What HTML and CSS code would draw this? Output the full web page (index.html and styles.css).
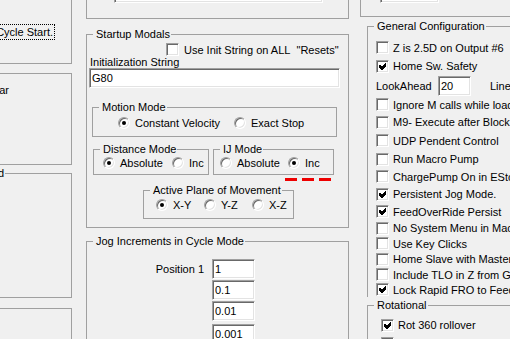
FILE: index.html
```html
<!DOCTYPE html>
<html lang="en">
<head>
  <meta charset="UTF-8">
  <title>General Logic Configuration</title>
  <link rel="stylesheet" href="styles.css">
</head>
<body>
  <div class="dialog">

    <!-- left column, mostly off screen -->
    <div class="col col-left">
      <div class="panel panel-tool">
        <div class="cut-row"><span class="focus">Stop Spindle. Wait for Cycle Start.</span></div>
      </div>
      <div class="panel panel-screen">
        <div class="cut-row">Flash Error Bar</div>
      </div>
      <fieldset class="group group-field">
        <legend><span>Tool Change Method</span></legend>
      </fieldset>
      <div class="panel panel-bottom"></div>
    </div>

    <!-- middle column -->
    <div class="col col-mid">
      <div class="panel panel-top-mid">
        <input class="edit edit-top-mid" type="text" value="">
      </div>

      <fieldset class="group startup">
        <legend>Startup Modals</legend>
        <label class="check check-init"><span class="cb"></span>Use Init String on ALL&nbsp; "Resets"</label>
        <div class="caption">Initialization String</div>
        <input class="edit edit-init" type="text" value="G80">

        <fieldset class="group motion">
          <legend>Motion Mode</legend>
          <div class="radios">
            <label class="radio"><span class="rb on"></span>Constant Velocity</label>
            <label class="radio"><span class="rb"></span>Exact Stop</label>
          </div>
        </fieldset>

        <div class="mode-row">
          <fieldset class="group distance">
            <legend>Distance Mode</legend>
            <div class="radios">
              <label class="radio"><span class="rb on"></span>Absolute</label>
              <label class="radio"><span class="rb"></span>Inc</label>
            </div>
          </fieldset>
          <fieldset class="group ij">
            <legend>IJ Mode</legend>
            <div class="radios">
              <label class="radio"><span class="rb"></span>Absolute</label>
              <label class="radio"><span class="rb on"></span>Inc</label>
            </div>
          </fieldset>
        </div>
        <div class="marker"></div>

        <fieldset class="group plane">
          <legend>Active Plane of Movement</legend>
          <div class="radios">
            <label class="radio"><span class="rb on"></span>X-Y</label>
            <label class="radio"><span class="rb"></span>Y-Z</label>
            <label class="radio"><span class="rb"></span>X-Z</label>
          </div>
        </fieldset>
      </fieldset>

      <fieldset class="group jog">
        <legend>Jog Increments in Cycle Mode</legend>
        <div class="jog-grid">
          <span class="pos">Position 1</span>
          <input class="edit" type="text" value="1">
          <input class="edit" type="text" value="0.1">
          <input class="edit" type="text" value="0.01">
          <input class="edit last" type="text" value="0.001">
        </div>
      </fieldset>
    </div>

    <!-- right column -->
    <div class="col col-right">
      <div class="panel panel-top-right">
        <input class="edit edit-top-right" type="text" value="">
      </div>

      <fieldset class="group general">
        <legend>General Configuration</legend>
        <div class="gen-grid">
          <label class="check"><span class="cb"></span>Z is 2.5D on Output #6</label>
          <label class="check"><span class="cb"><svg viewBox="0 0 9 9"><polygon points="1,3 2,3 4,5 7,1 8,1 8,4 4,8 3,8 1,6"/></svg></span>Home Sw. Safety</label>
          <div class="lookahead"><span class="la-label">LookAhead</span><input class="edit edit-la" type="text" value="20"><span class="la-unit">Lines</span></div>
          <label class="check"><span class="cb"></span>Ignore M calls while loading</label>
          <label class="check"><span class="cb"></span>M9- Execute after Block</label>
          <label class="check"><span class="cb"></span>UDP Pendent Control</label>
          <label class="check"><span class="cb"></span>Run Macro Pump</label>
          <label class="check"><span class="cb"></span>ChargePump On in EStop</label>
          <label class="check"><span class="cb"><svg viewBox="0 0 9 9"><polygon points="1,3 2,3 4,5 7,1 8,1 8,4 4,8 3,8 1,6"/></svg></span>Persistent Jog Mode.</label>
          <label class="check"><span class="cb"><svg viewBox="0 0 9 9"><polygon points="1,3 2,3 4,5 7,1 8,1 8,4 4,8 3,8 1,6"/></svg></span>FeedOverRide Persist</label>
          <label class="check"><span class="cb"></span>No System Menu in Mach3</label>
          <label class="check"><span class="cb"></span>Use Key Clicks</label>
          <label class="check"><span class="cb"></span>Home Slave with Master</label>
          <label class="check"><span class="cb"></span>Include TLO in Z from G31</label>
          <label class="check"><span class="cb"><svg viewBox="0 0 9 9"><polygon points="1,3 2,3 4,5 7,1 8,1 8,4 4,8 3,8 1,6"/></svg></span>Lock Rapid FRO to Feed FRO</label>
        </div>
      </fieldset>

      <fieldset class="group rotational">
        <legend>Rotational</legend>
        <div class="rot-grid">
          <label class="check"><span class="cb"><svg viewBox="0 0 9 9"><polygon points="1,3 2,3 4,5 7,1 8,1 8,4 4,8 3,8 1,6"/></svg></span>Rot 360 rollover</label>
          <label class="check"><span class="cb"></span>Ang Short Rot on G0</label>
        </div>
      </fieldset>
    </div>

  </div>
</body>
</html>
```

FILE: styles.css
```css
* {
  box-sizing: border-box;
}
html, body {
  margin: 0;
  width: 510px;
  height: 339px;
  overflow: hidden;
}
body {
  background: #f0f0f0;
  font-family: "Liberation Sans", Arial, sans-serif;
  font-size: 11px;
  line-height: 14px;
  color: #000;
}
.dialog {
  display: flex;
  align-items: flex-start;
  margin-left: -128px;
}
.col {
  flex: none;
  display: flex;
  flex-direction: column;
}
.col-left {
  width: 200px;
  margin-top: -40px;
}
.col-mid {
  width: 263px;
  margin-left: 14px;
  margin-top: -30px;
}
.col-right {
  width: 200px;
  margin-left: 11px;
  margin-top: -30px;
}

/* plain frames and group boxes */
.panel {
  border: 1px solid #a0a0a0;
}
.group {
  margin: 0;
  padding: 0;
  border: 1px solid #a0a0a0;
  min-width: 0;
}
.group > legend {
  margin-left: 6px;
  padding: 0 1px 0 3px;
  line-height: 14px;
  white-space: nowrap;
}

/* controls */
.cb {
  width: 13px;
  height: 13px;
  flex: none;
  display: flex;
  align-items: center;
  justify-content: center;
  background: #fff;
  border: 1px solid;
  border-color: #a0a0a0 #fff #fff #a0a0a0;
  box-shadow: inset 1px 1px 0 #696969, inset -1px -1px 0 #e3e3e3;
}
.cb svg {
  display: block;
  width: 9px;
  height: 9px;
  shape-rendering: crispEdges;
}
.rb {
  position: relative;
  width: 12px;
  height: 12px;
  flex: none;
  border-radius: 50%;
  background: #fff;
  border: 1px solid;
  border-color: #a0a0a0 #fff #fff #a0a0a0;
  box-shadow: inset 1px 1px 0 #696969, inset -1px -1px 0 #e3e3e3;
}
.rb.on::after {
  content: "";
  position: absolute;
  left: 3px;
  top: 3px;
  width: 4px;
  height: 4px;
  border-radius: 50%;
  background: #000;
}
.edit {
  display: block;
  flex: none;
  height: 20px;
  margin: 0;
  padding: 0 0 0 2px;
  border: 1px solid;
  border-color: #a0a0a0 #fff #fff #a0a0a0;
  box-shadow: inset 1px 1px 0 #696969, inset -1px -1px 0 #e3e3e3;
  background: #fff;
  font: inherit;
  color: #000;
  outline: none;
}
.check {
  display: flex;
  align-items: center;
  gap: 4px;
  white-space: nowrap;
}
.radios {
  display: flex;
}
.radio {
  flex: none;
  display: flex;
  align-items: center;
  gap: 5px;
  height: 12px;
  white-space: nowrap;
}

/* left column */
.cut-row {
  display: flex;
  justify-content: flex-end;
  white-space: nowrap;
}
.panel-tool {
  height: 104px;
  padding: 63px 16px 0 0;
}
.focus {
  border: 1px dotted #000;
  padding: 0 1px;
}
.panel-screen {
  height: 92px;
  margin-top: 9px;
  padding: 9px 62px 0 0;
}
.group-field {
  height: 132px;
  margin-top: 1px;
}
.group-field > legend {
  width: 126px;
}
.group-field > legend span {
  display: block;
  text-align: right;
}
.panel-bottom {
  height: 100px;
  margin-top: 10px;
}

/* middle column */
.panel-top-mid {
  height: 49px;
  padding: 12px 0 0 27px;
}
.edit-top-mid {
  width: 209px;
}
.startup {
  margin-top: 8px;
  padding-bottom: 8px;
}
.check-init {
  height: 13px;
  margin: 2px 0 0 79px;
  gap: 5px;
}
.caption {
  line-height: 12px;
  padding-left: 3px;
}
.edit-init {
  width: 251px;
  margin-left: 2px;
}
.motion {
  width: 245px;
  margin: 12px 0 0 5px;
}
.motion .radios {
  padding: 3px 0 7px 25px;
}
.motion .radio {
  width: 116px;
}
.mode-row {
  display: flex;
  gap: 4px;
  margin: 5px 0 0 6px;
}
.distance {
  width: 116px;
}
.distance .radios {
  padding: 1px 0 5px 9px;
}
.distance .radio {
  width: 69px;
}
.ij {
  width: 121px;
}
.ij .radios {
  padding: 1px 0 5px 6px;
}
.ij .radio {
  width: 68px;
}
.marker {
  width: 46px;
  height: 3px;
  margin: 3px 0 0 198px;
  background: repeating-linear-gradient(to right, #e00 0 12px, transparent 12px 17px);
}
.plane {
  width: 151px;
  margin: 2px 0 0 56px;
}
.plane .radios {
  padding: 2px 0 7px 12px;
}
.plane .radio {
  width: 48px;
}
.jog {
  height: 130px;
  margin-top: 6px;
}
.jog-grid {
  display: grid;
  grid-template-columns: 117px 43px;
  column-gap: 8px;
  row-gap: 1px;
  margin-top: 11px;
}
.jog-grid .pos {
  grid-row: 1;
  grid-column: 1;
  justify-self: end;
  align-self: center;
}
.jog-grid .edit {
  grid-column: 2;
  width: 43px;
}
.jog-grid .last {
  margin-top: 2px;
}

/* right column */
.panel-top-right {
  height: 47px;
  padding: 12px 0 0 19px;
}
.edit-top-right {
  width: 59px;
}
.general {
  margin: 2px 0 0 7px;
  border-bottom: none;
}
.gen-grid {
  display: grid;
  grid-template-rows: 17px 20px 20px 17px 18px 19px 18px 17px 18px 17px 16px 15px 16px 15px 15px;
  padding: 6px 0 0 8px;
}
.lookahead {
  display: flex;
  align-items: center;
  white-space: nowrap;
}
.la-label {
  flex: none;
  width: 62px;
}
.edit-la {
  width: 33px;
}
.la-unit {
  flex: none;
  margin-left: 19px;
}
.rotational {
  height: 80px;
  margin: 1px 0 0 7px;
}
.rot-grid {
  display: grid;
  grid-auto-rows: 18px;
  padding: 4px 0 0 13px;
}
```
